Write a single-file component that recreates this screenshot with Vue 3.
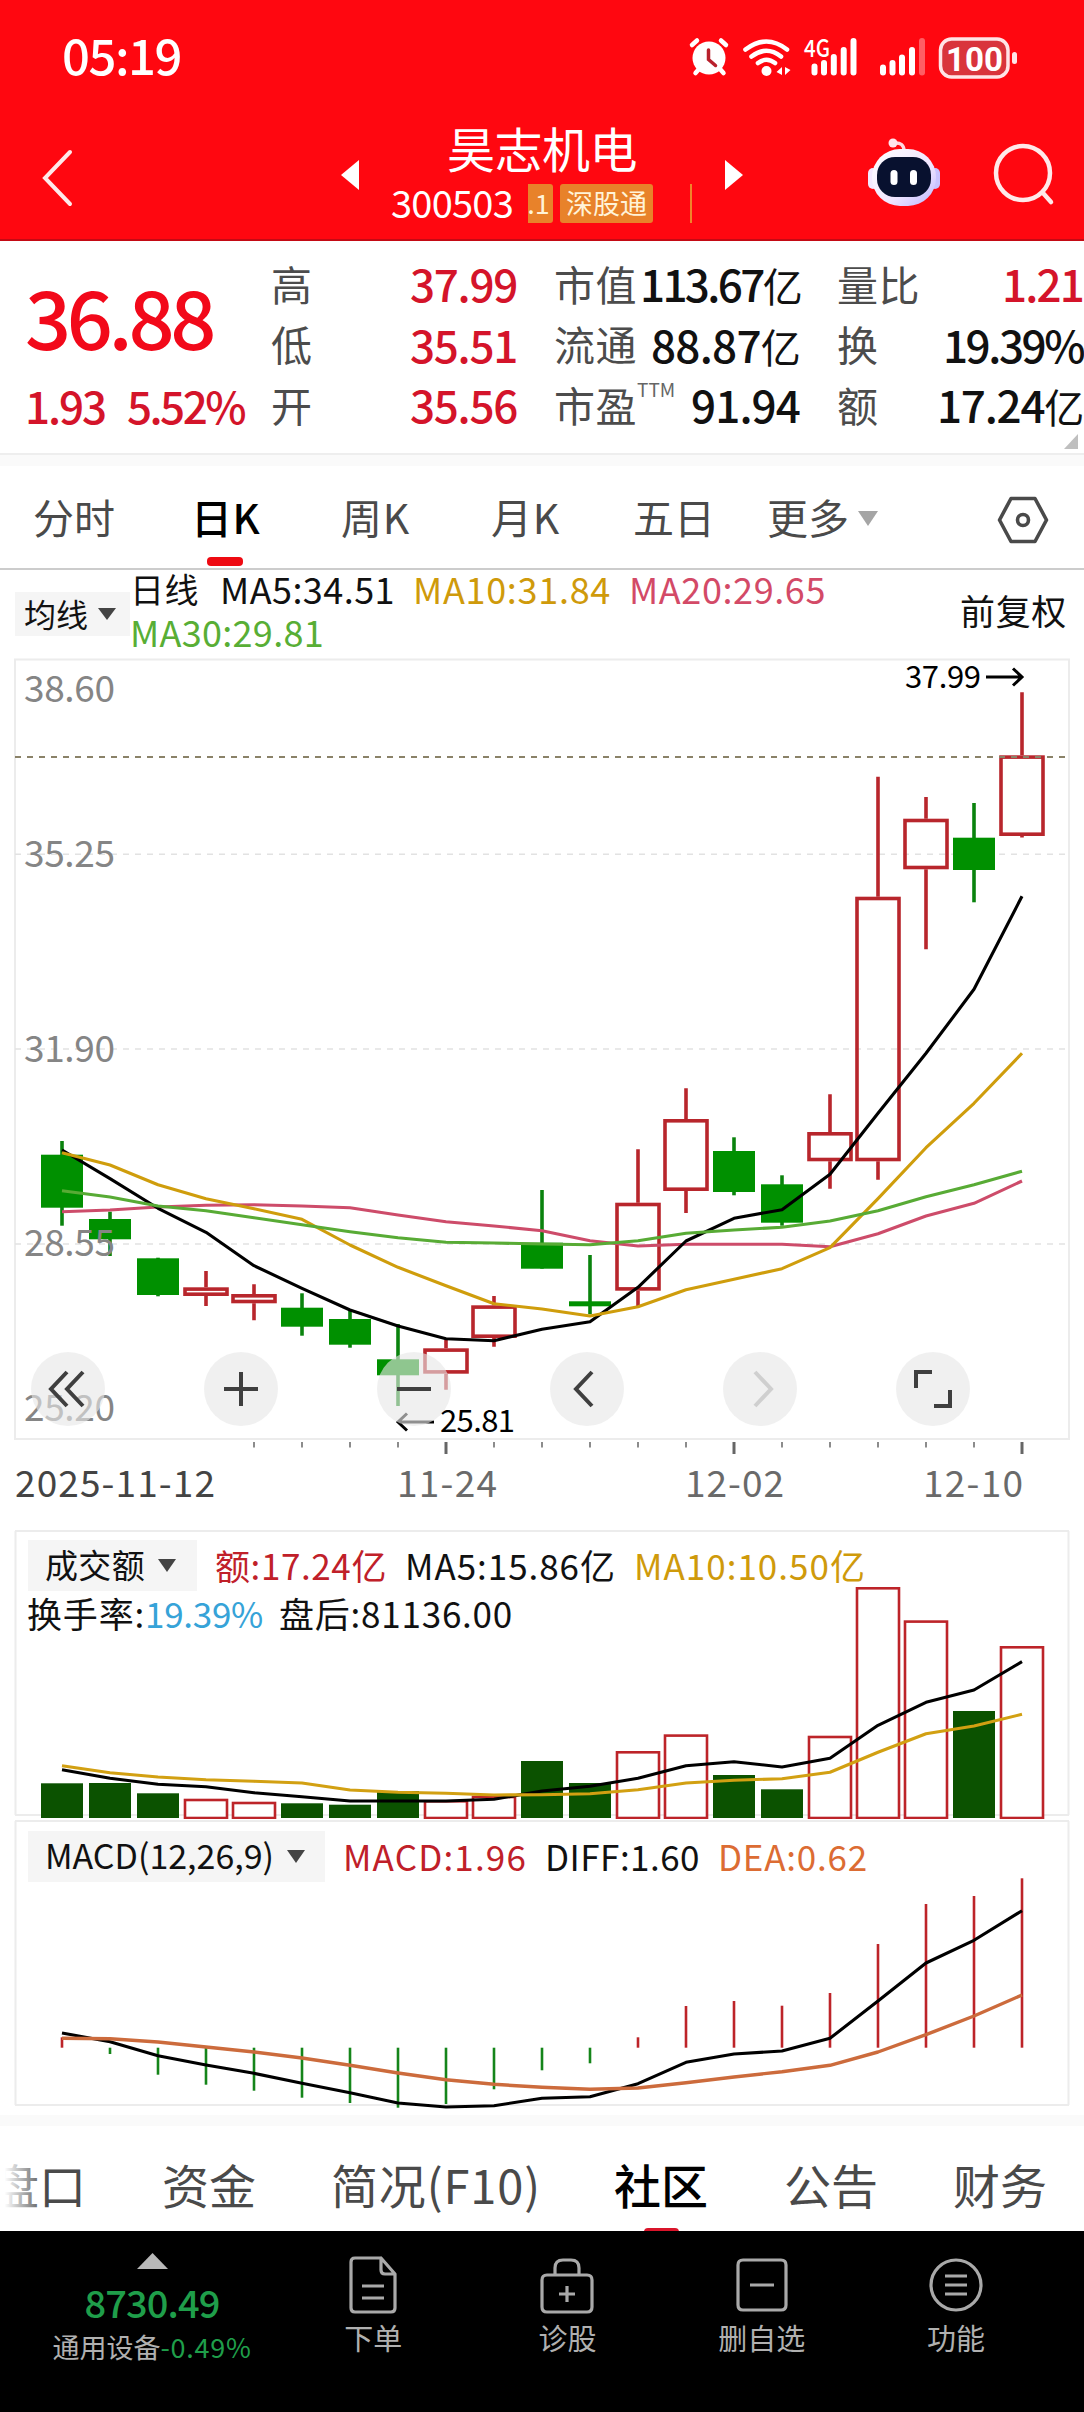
<template>
  <div class="stock-page">
    <!-- 顶部红色区域 -->
    <header class="header">
      <div class="status-bar">
        <span v-fit="119" class="status-time">05:19</span>
        <svg class="status-icons" width="350" height="76" viewBox="0 0 350 76">
          <!-- 闹钟 -->
          <g fill="none" stroke="#fff" stroke-linecap="round">
            <circle cx="29" cy="38" r="16.5" fill="#fff" stroke="none" />
            <path d="M12 25L17 20.500M41 20.500L46 25" stroke-width="4.500" />
            <path d="M19 49L15.500 53M40 49L43.500 53" stroke-width="4.500" />
            <path d="M28.500 30V39.500L35.500 45.500" stroke="#b8202c" stroke-width="3.500" />
          </g>
          <!-- wifi -->
          <g fill="none" stroke="#fff" stroke-width="4.600" stroke-linecap="round">
            <path d="M65.500 29.500Q86.500 13.500 107 29.500" />
            <path d="M71.500 36.500Q86.500 25 101 36.500" />
            <path d="M78 43Q86.500 36.500 95 43" />
          </g>
          <circle cx="86.500" cy="51" r="5" fill="#fff" />
          <path d="M102 47V55L96.500 52zM105 55V47L110.500 50z" fill="#fff" />
          <!-- 信号 -->
          <text x="124" y="36.500" class="net-type" textLength="26" lengthAdjust="spacingAndGlyphs">4G</text>
          <g stroke="#fff" stroke-width="6" stroke-linecap="round">
            <path d="M134.500 46.500V52.500M144 43V52.500M153.800 37V52.500M163.700 30V52.500M173.500 21V52.500" />
            <path d="M203 47.500V52.500M212.500 43V52.500M222 37.500V52.500M232 30V52.500" />
            <path d="M242 21V52.500" opacity=".35" />
          </g>
          <!-- 电池 -->
          <rect x="260.500" y="19" width="67.500" height="38" rx="11" fill="#d9343c" stroke="#ffe4e6" stroke-width="3.500" />
          <rect x="332" y="32" width="5" height="12" rx="2.500" fill="#ffe4e6" />
          <text x="266" y="50.500" class="battery-text" textLength="57" lengthAdjust="spacingAndGlyphs">100</text>
        </svg>
      </div>

      <div class="nav-bar">
        <svg class="nav-back" width="34" height="60" viewBox="0 0 34 60" fill="none" stroke="#ffe9ea" stroke-width="4">
          <path d="M29 4L4 30L29 56" stroke-linecap="round" />
        </svg>
        <svg class="nav-prev" width="18" height="30" viewBox="0 0 18 30"><path d="M18 0V30L0 15z" fill="#fff" /></svg>
        <div class="nav-center">
          <span v-fit="190" class="stock-name">昊志机电</span>
          <div class="stock-sub">
            <span v-fit="122" class="stock-code">300503</span>
            <span class="stock-tag cut">.1</span>
            <span class="stock-tag">深股通</span>
            <i class="tag-line"></i>
          </div>
        </div>
        <svg class="nav-next" width="18" height="30" viewBox="0 0 18 30"><path d="M0 0V30L18 15z" fill="#fff" /></svg>
        <svg class="nav-robot" width="74" height="72" viewBox="0 0 74 72">
          <defs>
            <linearGradient id="shell" x1="0" y1="0" x2="1" y2="1">
              <stop offset="0" stop-color="#fff" />
              <stop offset=".6" stop-color="#f1e6ff" />
              <stop offset="1" stop-color="#b9b4ff" />
            </linearGradient>
          </defs>
          <path d="M27 7Q37 6 37 15" fill="none" stroke="#ffd9e2" stroke-width="3.500" />
          <circle cx="26" cy="7" r="4.500" fill="#ffe6ee" />
          <rect x="1" y="32" width="10" height="21" rx="5" fill="#f3e8ff" />
          <rect x="63" y="32" width="10" height="21" rx="5" fill="#c9c3ff" />
          <rect x="5" y="13" width="64" height="57" rx="28" fill="url(#shell)" />
          <rect x="10" y="21" width="54" height="40" rx="18" fill="#08112f" />
          <rect x="23.500" y="34" width="7" height="15" rx="3.500" fill="#fff" />
          <rect x="43" y="34" width="7" height="15" rx="3.500" fill="#fff" />
        </svg>
        <svg class="nav-search" width="64" height="64" viewBox="0 0 64 64" fill="none" stroke="#ffe9ea" stroke-width="4.500" stroke-linecap="round">
          <circle cx="31" cy="31" r="27" />
          <path d="M51 51L59 60" />
        </svg>
      </div>
    </header>

    <!-- 报价 -->
    <section class="quote">
      <div class="price-box">
        <span v-fit="187" class="price">36.88</span>
        <div class="change">
          <span v-fit="80">1.93</span>
          <span v-fit="117">5.52%</span>
        </div>
      </div>
      <div v-for="(col, ci) in quotes" :key="ci" class="quote-col" :class="'col-' + ci">
        <div v-for="q in col" :key="q.label" class="quote-row">
          <span v-fit="q.lw" class="quote-label">{{ q.label }}</span>
          <sup v-if="q.sup" class="quote-sup">{{ q.sup }}</sup>
          <span v-fit="q.w" class="quote-value" :class="{ up: q.up }">{{ q.value }}<small v-if="q.unit">{{ q.unit }}</small></span>
        </div>
      </div>
      <i class="corner"></i>
    </section>

    <!-- 周期切换 -->
    <nav class="period-tabs">
      <span
        v-for="(t, i) in periods"
        :key="t"
        v-fit="t.includes('K') ? 69 : 82"
        class="period"
        :class="['p-' + i, { active: i === 1 }]"
      >{{ t }}</span>
      <svg class="more-arrow" width="20" height="15" viewBox="0 0 20 15"><path d="M0 0H20L10 15z" fill="#a5a5a5" /></svg>
      <svg class="setting" width="52" height="48" viewBox="0 0 52 48" fill="none" stroke="#4a4a4a" stroke-width="3.600" stroke-linejoin="round">
        <path d="M14 2.500H38L49.500 24L38 45.500H14L2.500 24z" />
        <circle cx="26" cy="24" r="5.500" />
      </svg>
    </nav>

    <!-- 均线信息 -->
    <section class="ma-bar">
      <div class="pick ma-pick">
        <span v-fit="64">均线</span>
        <svg width="18" height="12" viewBox="0 0 18 12"><path d="M0 0H18L9 12z" fill="#444" /></svg>
      </div>
      <div class="ma-list">
        <span v-fit="69">日线</span>
        <span v-fit="175" class="ma5">MA5:34.51</span>
        <span v-fit="198" class="ma10">MA10:31.84</span>
        <span v-fit="197" class="ma20">MA20:29.65</span>
        <span v-fit="194" class="ma30">MA30:29.81</span>
      </div>
      <span v-fit="107" class="adjust">前复权</span>
    </section>

    <!-- K线 -->
    <section class="kline">
      <svg width="1084" height="873" viewBox="0 652 1084 873">
        <rect x="15" y="659.500" width="1054" height="779.500" fill="none" stroke="#ececec" stroke-width="2" />
        <path d="M15 854.300H1069M15 1049H1069M15 1244H1069" stroke="#e2e2e2" stroke-width="1.500" stroke-dasharray="6 6" />

        <g v-for="(c, i) in candles" :key="i">
          <template v-if="c[0]">
            <path :d="`M${px(i)} ${c[1]}V${c[2]}M${px(i)} ${c[3]}V${c[4]}`" stroke="#b8262c" stroke-width="3.600" />
            <rect :x="px(i) - 21" :y="c[2] + 1.800" width="42" :height="c[3] - c[2] - 3.600" fill="none" stroke="#b8262c" stroke-width="3.600" />
          </template>
          <template v-else>
            <path :d="`M${px(i)} ${c[1]}V${c[4]}`" stroke="#0a830d" stroke-width="3.600" />
            <rect :x="px(i) - 21" :y="c[2]" width="42" :height="c[3] - c[2]" fill="#009000" />
          </template>
        </g>
        <path d="M15 757H1069" stroke="#8a8268" stroke-width="1.800" stroke-dasharray="6 6" />

        <polyline :points="line(ma20)" class="trend" stroke="#cd4c6a" />
        <polyline :points="line(ma5)" class="trend black" />
        <polyline :points="line(ma10)" class="trend" stroke="#cf9d0c" />
        <polyline :points="line(ma30)" class="trend" stroke="#58ab35" />

        <text v-for="l in priceLabels" :key="l[0]" x="24" :y="l[1]" class="axis-price" textLength="91">{{ l[0] }}</text>

        <text x="905" y="688" class="mark" textLength="76">37.99</text>
        <path d="M986 677H1021M1013 668.500L1022 677L1013 685.500" class="mark-arrow" />
        <text x="440" y="1432" class="mark" textLength="75">25.81</text>
        <path d="M434 1422H399M407 1413.500L398 1422L407 1430.500" class="mark-arrow" />

        <!-- 日期刻度 -->
        <path v-for="i in 17" :key="'t' + i" :d="`M${px(i + 3)} 1442V${bigTick(i + 3) ? 1454 : 1447.500}`" stroke="#666" :stroke-width="bigTick(i + 3) ? 3 : 1.500" />
        <text v-for="d in dates" :key="d.text" :x="d.x" y="1497" class="axis-date" :class="{ dark: d.dark }" :textLength="d.w">{{ d.text }}</text>
      </svg>

      <!-- 浮动操作按钮 -->
      <div class="tools">
        <div v-for="(d, i) in toolIcons" :key="i" class="tool" :class="{ disabled: i === 4 }">
          <svg width="74" height="74" viewBox="-37 -37 74 74" fill="none" stroke="#3f3f3f" stroke-width="4"><path :d="d" /></svg>
        </div>
      </div>
    </section>

    <!-- 成交额 -->
    <section class="panel volume">
      <svg class="panel-chart" width="1084" height="294" viewBox="0 1525 1084 294">
        <path d="M15 1531H1069M15 1815H1069M15.500 1531V1815M1068.500 1531V1815" stroke="#ececec" stroke-width="2" />
        <template v-for="(v, i) in volumes" :key="i">
          <rect v-if="candles[i][0]" :x="px(i) - 21" :y="v + 1.300" width="42" :height="1816.700 - v" fill="#fff" stroke="#bd2429" stroke-width="2.600" />
          <rect v-else :x="px(i) - 21" :y="v" width="42" :height="1818 - v" fill="#0b5200" />
        </template>
        <polyline :points="line(vma5)" class="trend black" />
        <polyline :points="line(vma10)" class="trend" stroke="#d2a012" />
      </svg>
      <div class="legend">
        <div class="pick vol-pick">
          <span v-fit="100">成交额</span>
          <svg width="18" height="13" viewBox="0 0 18 13"><path d="M0 0H18L9 13z" fill="#444" /></svg>
        </div>
        <span v-fit="172" class="red">额:17.24亿</span>
        <span v-fit="211">MA5:15.86亿</span>
        <span v-fit="232" class="ma10">MA10:10.50亿</span>
      </div>
      <div class="legend sub">
        <span v-fit="118">换手率:</span>
        <span v-fit="118" class="blue">19.39%</span>
        <span v-fit="234" class="after">盘后:81136.00</span>
      </div>
    </section>

    <!-- MACD -->
    <section class="panel macd">
      <svg class="panel-chart" width="1084" height="296" viewBox="0 1819 1084 296">
        <path d="M15 1821H1069M15 2105H1069M15.500 1821V2105M1068.500 1821V2105" stroke="#ececec" stroke-width="2" />
        <path v-for="(m, i) in macd" :key="i" :d="`M${px(i)} 2047.700V${m}`" :stroke="m < 2047 ? '#bd2429' : '#15851a'" stroke-width="2.600" />
        <polyline :points="line(diff)" class="trend black" />
        <polyline :points="line(dea)" class="trend dea-line" />
      </svg>
      <div class="legend">
        <div class="pick macd-pick">
          <span v-fit="229">MACD(12,26,9)</span>
          <svg width="18" height="13" viewBox="0 0 18 13"><path d="M0 0H18L9 13z" fill="#444" /></svg>
        </div>
        <span v-fit="184" class="red">MACD:1.96</span>
        <span v-fit="155">DIFF:1.60</span>
        <span v-fit="150" class="dea">DEA:0.62</span>
      </div>
    </section>

    <div class="band"></div>

    <!-- 资讯标签 -->
    <nav class="info-tabs">
      <span v-fit="94" class="info i-0">盘口</span>
      <span v-fit="94" class="info i-1">资金</span>
      <span v-fit="210" class="info i-2">简况(F10)</span>
      <span v-fit="94" class="info i-3 active">社区</span>
      <span v-fit="94" class="info i-4">公告</span>
      <span v-fit="94" class="info i-5">财务</span>
    </nav>

    <!-- 底部栏 -->
    <footer class="bottom-bar">
      <div class="index-box">
        <svg width="31" height="16" viewBox="0 0 31 16"><path d="M15.500 0L31 16H0z" fill="#b8b8b8" /></svg>
        <span v-fit="135" class="index-value">8730.49</span>
        <div class="index-name"><span>通用设备</span><span v-fit="91" class="down">-0.49%</span></div>
      </div>
      <div v-for="a in actions" :key="a.name" class="action">
        <svg width="60" height="60" viewBox="-30 -30 60 60" fill="none" stroke="#a9a9a9" stroke-width="3.200" stroke-linejoin="round"><path :d="a.icon" /></svg>
        <span>{{ a.name }}</span>
      </div>
    </footer>
  </div>
</template>

<script setup>
// 让文字按给定宽度排布（调整字距）
const vFit = {
  mounted(el, { value }) {
    const count = el.textContent.length
    el.style.letterSpacing = `${(value - el.getBoundingClientRect().width) / count}px`
  }
}

const quotes = [
  [
    { label: '高', lw: 41, value: '37.99', w: 107, up: true },
    { label: '低', lw: 41, value: '35.51', w: 107, up: true },
    { label: '开', lw: 41, value: '35.56', w: 107, up: true }
  ],
  [
    { label: '市值', lw: 83, value: '113.67', unit: '亿', w: 160 },
    { label: '流通', lw: 83, value: '88.87', unit: '亿', w: 149 },
    { label: '市盈', lw: 83, sup: 'TTM', value: '91.94', w: 109 }
  ],
  [
    { label: '量比', lw: 83, value: '1.21', w: 81, up: true },
    { label: '换', lw: 41, value: '19.39%', w: 140 },
    { label: '额', lw: 41, value: '17.24', unit: '亿', w: 146 }
  ]
]

const periods = ['分时', '日K', '周K', '月K', '五日', '更多']

const px = (i) => 62 + i * 48
const line = (list) => list.map((y, i) => `${px(i)},${y}`).join(' ')
const bigTick = (i) => [8, 14, 20].includes(i)

// [是否上涨, 最高, 实体上沿, 实体下沿, 最低]
const candles = [
  [0, 1141, 1154.7, 1207.7, 1225.7],
  [0, 1211.7, 1219, 1239.3, 1256],
  [0, 1257.7, 1258.3, 1295, 1296.3],
  [1, 1271, 1287.3, 1296, 1306],
  [1, 1284.3, 1294, 1303.3, 1320.3],
  [0, 1293.3, 1307.7, 1326.7, 1335.7],
  [0, 1310, 1319, 1344.7, 1347.7],
  [0, 1324, 1359.3, 1375.3, 1406],
  [1, 1340, 1348.3, 1373.7, 1389.7],
  [1, 1296, 1305.3, 1338, 1346.7],
  [0, 1190, 1242.7, 1268.7, 1268.7],
  [0, 1255, 1301.3, 1306.3, 1314.3],
  [1, 1149.3, 1202.7, 1290.7, 1306],
  [1, 1088.3, 1119, 1191, 1213],
  [0, 1137.3, 1151, 1192, 1195.3],
  [0, 1175.3, 1184.3, 1222.7, 1225.7],
  [1, 1094.3, 1132, 1161.3, 1188.7],
  [1, 776.7, 896.7, 1161.3, 1179.7],
  [1, 797, 818.7, 869.3, 949.3],
  [0, 803, 837.7, 870, 902.3],
  [1, 692.3, 755.3, 836, 837.5]
]

const ma5 = [1150, 1178.7, 1208.3, 1232.3, 1265.7, 1288.3, 1310, 1326, 1338.7, 1340.7, 1329.3, 1321.7, 1287.3, 1241, 1218.3, 1209.7, 1174.3, 1113.3, 1053.3, 989.3, 896.3]
const ma10 = [1152.7, 1165, 1184.7, 1198.7, 1208.7, 1219.3, 1245, 1267.3, 1285.7, 1303.7, 1309, 1316, 1306.7, 1289.7, 1279.3, 1268.7, 1247.7, 1198.7, 1147.7, 1103.3, 1053.3]
const ma20 = [1211.7, 1210, 1207, 1205.3, 1204.7, 1206, 1207.7, 1215, 1221.7, 1226, 1230.7, 1240.7, 1246, 1244.3, 1244.3, 1244.3, 1246.7, 1233.7, 1216, 1203.3, 1181]
const ma30 = [1190.7, 1197, 1206, 1210.7, 1217.7, 1224.7, 1231.7, 1237.7, 1242.3, 1243, 1244, 1244.7, 1240.7, 1233.3, 1230, 1227.3, 1221, 1210.7, 1196.7, 1184.7, 1171.3]

const priceLabels = [['38.60', 702], ['35.25', 866.500], ['31.90', 1061.500], ['28.55', 1256], ['25.20', 1420.500]]

const dates = [
  { text: '2025-11-12', x: 15, w: 200, dark: true },
  { text: '11-24', x: 397, w: 100 },
  { text: '12-02', x: 685, w: 99 },
  { text: '12-10', x: 923, w: 100 }
]

const toolIcons = [
  'M-1 -17L-17 0L-1 17M15 -17L-1 0L15 17',
  'M-17 0H17M0 -17V17',
  'M-17 0H17',
  'M5 -17L-11 0L5 17',
  'M-5 -17L11 0L-5 17',
  'M-17 -1V-17H-1M17 1V17H1'
]

const volumes = [1783.3, 1783, 1793.3, 1798.7, 1801.7, 1803.3, 1804.7, 1791, 1800, 1795.7, 1761, 1783, 1751, 1734.3, 1775, 1789.3, 1735.7, 1587, 1620.3, 1711, 1646]
const vma5 = [1769.7, 1778.3, 1784.3, 1786.7, 1792.7, 1796.7, 1801, 1801, 1801, 1799.3, 1791, 1786.3, 1778.3, 1765.7, 1761.7, 1767, 1758.3, 1725.3, 1702.3, 1690, 1661.7]
const vma10 = [1765.7, 1772.7, 1777, 1779.7, 1781.3, 1783, 1790, 1792.3, 1793.3, 1795, 1794.7, 1793.7, 1789.7, 1783, 1780.3, 1778.7, 1772.3, 1752.3, 1733.7, 1726, 1714.3]

const macd = [2037.3, 2054, 2074.7, 2084.7, 2090.7, 2097.7, 2103, 2107.7, 2104, 2089.3, 2070.3, 2063.3, 2037.3, 2006, 2001, 2005.7, 1993, 1944, 1904, 1896, 1878.3]
const diff = [2033, 2041.7, 2055.7, 2065, 2073.3, 2083.3, 2092.7, 2103, 2107, 2105.7, 2098.3, 2096.7, 2083.7, 2062.3, 2054, 2051, 2038.3, 2001, 1963, 1940.3, 1910.7]
const dea = [2038.3, 2038.7, 2042, 2047, 2052, 2058, 2065.3, 2073, 2079.7, 2084.3, 2087.3, 2089.3, 2088, 2082.7, 2077, 2071.7, 2065.3, 2052, 2034.7, 2016, 1995]

const actions = [
  { name: '下单', icon: 'M8 -27H-18Q-22 -27 -22 -23V23Q-22 27 -18 27H18Q22 27 22 23V-11L8 -27V-15Q8 -11 12 -11H22M-11 1H11M-11 13H11' },
  { name: '诊股', icon: 'M-20 -10H20Q25 -10 25 -5V22Q25 27 20 27H-20Q-25 27 -25 22V-5Q-25 -10 -20 -10zM-12 -10V-17Q-12 -25 -4 -25H4Q12 -25 12 -17V-10M-8 9H8M0 1V17' },
  { name: '删自选', icon: 'M-19 -25H19Q24 -25 24 -20V20Q24 25 19 25H-19Q-24 25 -24 20V-20Q-24 -25 -19 -25zM-12 0H12' },
  { name: '功能', icon: 'M25 0A25 25 0 1 1 -25 0A25 25 0 1 1 25 0M-11 -9H11M-11 0H11M-11 9H11' }
]
</script>

<style>
body {
  background: #ffffff;
}
</style>

<style scoped>
.stock-page {
  width: 1084px;
  height: 2412px;
  overflow: hidden;
  display: flex;
  flex-direction: column;
  background: #ffffff;
  color: #111111;
  font-family: "Noto Sans CJK SC", "Noto Sans", sans-serif;
  line-height: 1;
  white-space: nowrap;
}

.stock-page svg {
  display: block;
  flex-shrink: 0;
}

.stock-page span {
  flex-shrink: 0;
}

/* 顶部 */
.header {
  height: 241px;
  box-sizing: border-box;
  background: #ff0710;
  border-bottom: 2px solid #c40a14;
  color: #ffffff;
}

.status-bar {
  height: 114px;
  padding: 20px 54px 0 62px;
  box-sizing: border-box;
  display: flex;
  justify-content: space-between;
}

.status-time {
  margin-top: 9px;
  height: 49px;
  font-size: 49px;
  font-weight: 500;
}

.net-type {
  font-size: 24px;
  font-weight: 500;
  fill: #ffffff;
}

.battery-text {
  font-family: Roboto, sans-serif;
  font-size: 34px;
  font-weight: 700;
  fill: #ffffff;
}

.nav-bar {
  display: flex;
  padding-left: 41px;
}

.nav-back {
  margin-top: 34px;
}

.nav-prev {
  margin: 46px 0 0 266px;
}

.nav-center {
  width: 366px;
  display: flex;
  flex-direction: column;
  align-items: center;
}

.stock-name {
  margin-top: 9px;
  font-size: 48px;
  height: 48px;
}

.stock-sub {
  display: flex;
  align-items: center;
  align-self: stretch;
  margin-top: 13px;
  height: 39px;
  padding-left: 32px;
}

.stock-code {
  font-size: 38px;
  margin-right: 15px;
  padding-bottom: 4px;
}

.stock-tag {
  width: 93px;
  height: 39px;
  line-height: 37px;
  border-radius: 3px;
  background: #e8822a;
  color: #fff3d8;
  font-size: 27px;
  text-align: center;
}

.stock-tag.cut {
  width: 25px;
  margin-right: 7px;
  border-radius: 0 3px 3px 0;
  text-indent: -4px;
}

.tag-line {
  width: 2px;
  height: 39px;
  margin-left: 37px;
  background: #f0842a;
}

.nav-next {
  margin-top: 46px;
}

.nav-robot {
  margin: 22px 0 0 124px;
}

.nav-search {
  margin: 28px 0 0 51px;
}

/* 报价 */
.quote {
  position: relative;
  height: 225px;
  box-sizing: border-box;
  display: flex;
  border-bottom: 11px solid #fafafa;
  box-shadow: inset 0 -2px 0 #eeeeee;
  padding-top: 12px;
}

.price-box {
  width: 271px;
  box-sizing: border-box;
  padding-left: 25px;
  color: #f2091a;
  font-weight: 500;
}

.price {
  display: inline-block;
  margin-top: 21px;
  font-size: 81px;
  height: 82px;
}

.change {
  display: flex;
  gap: 22px;
  margin-top: 27px;
  font-size: 44px;
  color: #d4142a;
}

.quote-col {
  box-sizing: border-box;
}

.col-0 {
  width: 246px;
}

.col-1 {
  width: 283px;
  padding-left: 37px;
}

.col-2 {
  width: 283px;
  padding-left: 37px;
}

.quote-row {
  height: 60.500px;
  display: flex;
  align-items: center;
}

.quote-label {
  font-size: 41px;
  color: #4c4c4c;
}

.quote-sup {
  font-size: 19px;
  color: #666666;
  align-self: flex-start;
  margin-top: 5px;
}

.quote-value {
  margin-left: auto;
  font-size: 44px;
  font-weight: 500;
}

.quote-value small {
  font-size: 40px;
  font-weight: 400;
}

.quote-value.up {
  color: #d4142a;
}

.corner {
  position: absolute;
  right: 6px;
  bottom: 6px;
  border-left: 14px solid transparent;
  border-bottom: 15px solid #bfbfbf;
}

/* 周期 */
.period-tabs {
  height: 104px;
  box-sizing: border-box;
  border-bottom: 2px solid #cccccc;
  display: flex;
  align-items: center;
  padding: 0 0 2px 33px;
}

.period {
  position: relative;
  font-size: 41px;
  color: #4a4a4a;
}

.p-1 { margin-left: 76px; }
.p-2 { margin-left: 81px; }
.p-3 { margin-left: 81px; }
.p-4 { margin-left: 73px; }
.p-5 { margin-left: 52px; }

.period.active {
  color: #000000;
  font-weight: 500;
}

.period.active::after {
  content: "";
  position: absolute;
  left: 16px;
  bottom: -29px;
  width: 36px;
  height: 9px;
  border-radius: 4px;
  background: #ee0a12;
}

.more-arrow {
  margin-left: 9px;
  margin-top: 5px;
}

.setting {
  margin-left: 119px;
  margin-top: 8px;
}

/* 均线 */
.ma-bar {
  height: 82px;
  display: flex;
  padding-left: 15px;
  font-size: 36px;
}

.pick {
  display: flex;
  align-items: center;
  background: #f5f5f5;
  box-sizing: border-box;
}

.pick span {
  padding-bottom: 3px;
}

.ma-pick {
  width: 115px;
  height: 44px;
  margin-top: 22px;
  padding-left: 9px;
  gap: 10px;
  font-size: 32px;
}

.ma-list {
  width: 800px;
  display: flex;
  flex-wrap: wrap;
  align-content: flex-start;
  line-height: 43px;
  margin-top: -3px;
}

.ma-list span:first-child {
  font-size: 34px;
}

.ma5 {
  margin-left: 21px;
}

.ma-list .ma10,
.ma20 {
  margin-left: 18px;
}

.ma10 {
  color: #cf9a0b;
}

.ma20 {
  color: #d34a67;
}

.ma30 {
  color: #58ae35;
  margin-right: 400px;
}

.adjust {
  margin: 22px 0 0 30px;
  font-size: 35px;
}

/* K线 */
.kline {
  position: relative;
  height: 873px;
}

.trend {
  fill: none;
  stroke-width: 3.100;
  stroke-linejoin: round;
}

.trend.black {
  stroke: #000000;
}

.trend.dea-line {
  stroke: #cc6b3c;
  stroke-width: 3.400;
}

.axis-price {
  font-size: 37px;
  fill: #858585;
}

.axis-date {
  font-size: 37px;
  fill: #6a6a6a;
}

.axis-date.dark {
  fill: #444444;
}

.mark {
  font-size: 31px;
  fill: #000000;
}

.mark-arrow {
  fill: none;
  stroke: #000000;
  stroke-width: 3;
}

.tools {
  position: absolute;
  left: 31px;
  top: 700px;
  display: flex;
  gap: 99px;
}

.tool {
  width: 74px;
  height: 74px;
  border-radius: 50%;
  background: rgba(230, 230, 230, 0.62);
}

.tool.disabled svg {
  opacity: 0.18;
}

/* 副图 */
.panel {
  position: relative;
  box-sizing: border-box;
}

.panel-chart {
  position: absolute;
  left: 0;
  top: 0;
}

.volume {
  height: 294px;
  padding: 15px 0 0 28px;
}

.macd {
  height: 296px;
  padding: 12px 0 0 28px;
}

.legend {
  position: relative;
  display: flex;
  align-items: center;
  height: 51px;
  gap: 18px;
  font-size: 35px;
}

.legend > span {
  padding-bottom: 3px;
}

.legend .pick {
  height: 51px;
  padding-left: 17px;
}

.vol-pick {
  width: 169px;
  gap: 13px;
  font-size: 33px;
}

.macd-pick {
  width: 297px;
  gap: 13px;
  font-size: 34px;
}

.legend.sub {
  height: 46px;
  gap: 0;
  padding-bottom: 2px;
  left: -1px;
}

.after {
  margin-left: 16px;
}

.red {
  color: #c02029;
}

.blue {
  color: #36a3d8;
}

.dea {
  color: #dc6c33;
}

.band {
  height: 11px;
  background: #fafafa;
}

/* 资讯标签 */
.info-tabs {
  position: relative;
  height: 105px;
  display: flex;
  align-items: center;
  padding-top: 9px;
  box-sizing: border-box;
  font-size: 47px;
  color: #4a4a4a;
  overflow: hidden;
}

.info-tabs::before {
  content: "";
  position: absolute;
  z-index: 1;
  left: 0;
  top: 0;
  width: 46px;
  height: 100%;
  background: linear-gradient(90deg, #ffffff 10%, rgba(255, 255, 255, 0));
}

.i-0 { margin-left: -8px; }
.i-1 { margin-left: 76px; }
.i-2 { margin-left: 75px; }
.i-3 { margin-left: 73px; }
.i-4 { margin-left: 76px; }
.i-5 { margin-left: 75px; }

.info.active {
  position: relative;
  color: #000000;
  font-weight: 500;
}

.info.active::after {
  content: "";
  position: absolute;
  left: 30px;
  bottom: -30px;
  width: 35px;
  height: 9px;
  border-radius: 4px;
  background: #d9142a;
}

/* 底部 */
.bottom-bar {
  height: 181px;
  background: #000000;
  display: flex;
  color: #b0b0b0;
}

.index-box {
  width: 276px;
  padding-left: 28px;
  box-sizing: border-box;
  display: flex;
  flex-direction: column;
  align-items: center;
  padding-top: 22px;
}

.index-value {
  margin-top: 14px;
  font-size: 38px;
  font-weight: 500;
  color: #1f9e4a;
}

.index-name {
  display: flex;
  margin-top: 12px;
  font-size: 27px;
}

.down {
  color: #1f9e4a;
}

.action {
  width: 194.300px;
  display: flex;
  flex-direction: column;
  align-items: center;
  padding-top: 24px;
  font-size: 29px;
  gap: 8px;
}
</style>
